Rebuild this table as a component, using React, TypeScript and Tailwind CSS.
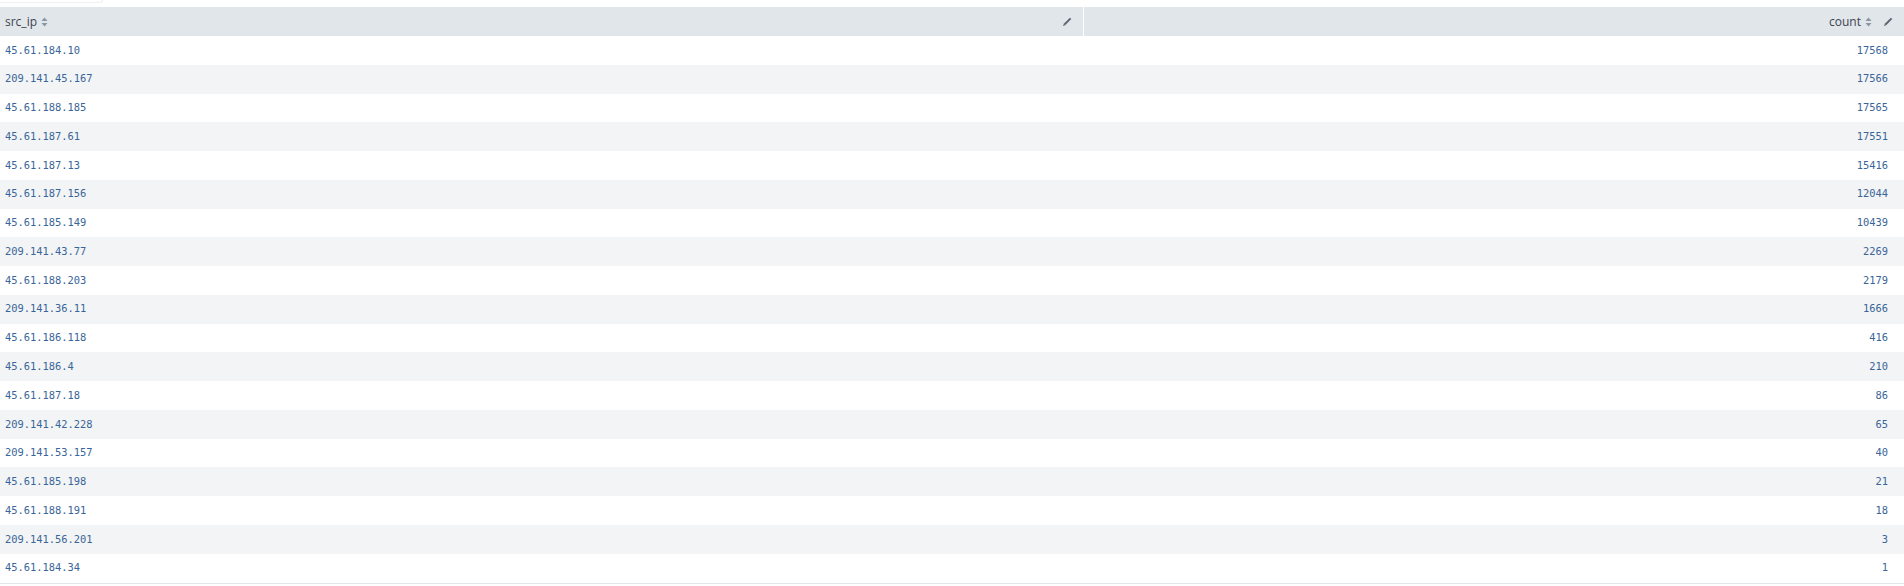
import React from "react";

type Row = { ip: string; count: number };

const rows: Row[] = [
  { ip: "45.61.184.10", count: 17568 },
  { ip: "209.141.45.167", count: 17566 },
  { ip: "45.61.188.185", count: 17565 },
  { ip: "45.61.187.61", count: 17551 },
  { ip: "45.61.187.13", count: 15416 },
  { ip: "45.61.187.156", count: 12044 },
  { ip: "45.61.185.149", count: 10439 },
  { ip: "209.141.43.77", count: 2269 },
  { ip: "45.61.188.203", count: 2179 },
  { ip: "209.141.36.11", count: 1666 },
  { ip: "45.61.186.118", count: 416 },
  { ip: "45.61.186.4", count: 210 },
  { ip: "45.61.187.18", count: 86 },
  { ip: "209.141.42.228", count: 65 },
  { ip: "209.141.53.157", count: 40 },
  { ip: "45.61.185.198", count: 21 },
  { ip: "45.61.188.191", count: 18 },
  { ip: "209.141.56.201", count: 3 },
  { ip: "45.61.184.34", count: 1 },
];

function SortIcon() {
  return (
    <svg width="7" height="10" viewBox="0 0 7 10" className="ml-[4px] inline-block">
      <path d="M3.5 0.5 L6.5 4 L0.5 4 Z" fill="#8a96a3" />
      <path d="M3.5 9.5 L6.5 6 L0.5 6 Z" fill="#8a96a3" />
    </svg>
  );
}

function PencilIcon() {
  return (
    <svg width="10" height="10" viewBox="0 0 10 10" className="inline-block">
      <path d="M2.2 7.8 L8.6 1.4" stroke="#5c6773" strokeWidth="2" strokeLinecap="butt" />
      <path d="M1 9 L1.6 7.2 L2.8 8.4 Z" fill="#5c6773" />
    </svg>
  );
}

export default function App() {
  const mono = { fontFamily: '"DejaVu Sans Mono", "Liberation Mono", monospace' };
  return (
    <div className="w-[1904px] bg-white" style={{ fontFamily: '"Open Sans", "Liberation Sans", sans-serif' }}>
      <div className="h-[7px]">
        <div className="h-[3px] w-[103px] rounded-br-[3px] border-b border-r border-[#eef0f2]" />
      </div>
      <div className="flex h-[29px] bg-[#e1e6eb] text-[12px] text-[#3c444d]">
        <div className="flex w-[1083px] items-center pl-[5px] pr-[11px]">
          <span>src_ip</span>
          <SortIcon />
          <span className="ml-auto flex">
            <PencilIcon />
          </span>
        </div>
        <div className="w-px bg-white" />
        <div className="flex flex-1 items-center justify-end pr-[11px]">
          <span>count</span>
          <SortIcon />
          <span className="ml-[11px] flex">
            <PencilIcon />
          </span>
        </div>
      </div>
      <div className="border-b border-[#e1e6eb] text-[10.4px] text-[#3a6598]" style={mono}>
        {rows.map((r, i) => (
          <div
            key={r.ip}
            className={`flex h-[28.78px] items-center justify-between pl-[5px] pr-[16px] ${
              i % 2 === 1 ? "bg-[#f2f4f5]" : "bg-white"
            }`}
          >
            <span>{r.ip}</span>
            <span>{r.count}</span>
          </div>
        ))}
      </div>
    </div>
  );
}
